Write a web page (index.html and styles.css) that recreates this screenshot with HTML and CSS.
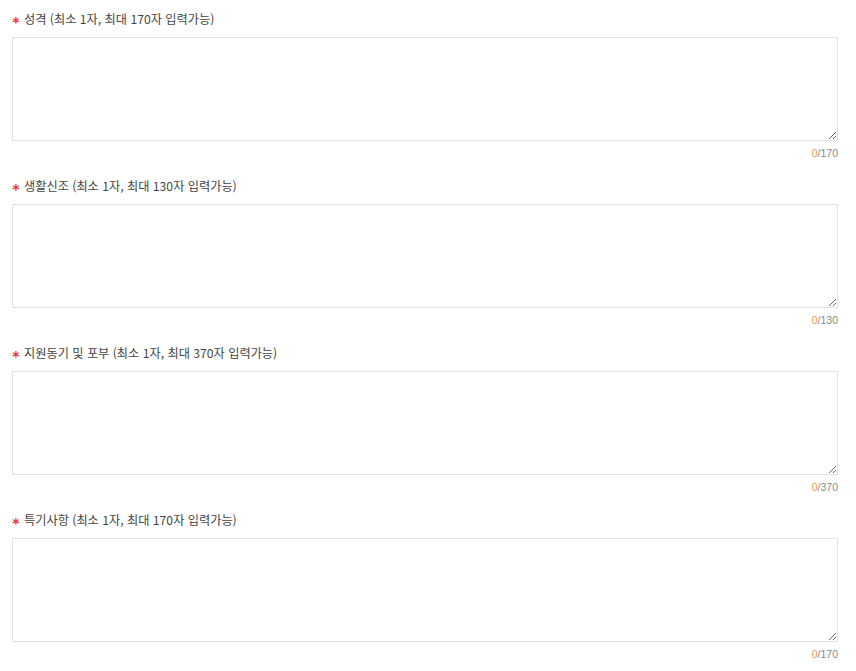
FILE: index.html
```html
<!DOCTYPE html>
<html lang="ko">
<head>
    <meta charset="UTF-8">
    <meta name="viewport" content="width=device-width, initial-scale=1.0">
    <title>자기소개</title>
    <link rel="stylesheet" href="styles.css">
</head>
<body>
    <div class="form">
        <div class="field">
            <label class="field-label" for="f1"><span class="req">*</span><span>성격 (최소 1자, 최대 170자 입력가능)</span></label>
            <textarea id="f1" class="field-input"></textarea>
            <div class="counter"><span class="count">0</span>/170</div>
        </div>

        <div class="field">
            <label class="field-label" for="f2"><span class="req">*</span><span>생활신조 (최소 1자, 최대 130자 입력가능)</span></label>
            <textarea id="f2" class="field-input"></textarea>
            <div class="counter"><span class="count">0</span>/130</div>
        </div>

        <div class="field">
            <label class="field-label" for="f3"><span class="req">*</span><span>지원동기 및 포부 (최소 1자, 최대 370자 입력가능)</span></label>
            <textarea id="f3" class="field-input"></textarea>
            <div class="counter"><span class="count">0</span>/370</div>
        </div>

        <div class="field">
            <label class="field-label" for="f4"><span class="req">*</span><span>특기사항 (최소 1자, 최대 170자 입력가능)</span></label>
            <textarea id="f4" class="field-input"></textarea>
            <div class="counter"><span class="count">0</span>/170</div>
        </div>
    </div>
</body>
</html>
```

FILE: styles.css
```css
body {
    margin: 0;
    padding: 9px 18px 0 12px;
    background: #ffffff;
    font-family: 'Noto Sans CJK KR', 'Noto Sans', sans-serif;
    color: #444;
}
.form {
    width: 826px;
}
.field {
    height: 167px;
}
.field-label {
    display: flex;
    align-items: center;
    gap: 4px;
    font-size: 12.2px;
    height: 20px;
    margin-bottom: 8px;
    color: #444;
}
.req {
    width: 8px;
    height: 20px;
    padding-top: 3px;
    box-sizing: border-box;
    text-align: center;
    color: #e2342f;
    font-family: 'DejaVu Sans', sans-serif;
    font-size: 14px;
    font-weight: bold;
    line-height: 20px;
}
.field-input {
    display: block;
    box-sizing: border-box;
    width: 100%;
    height: 104px;
    margin: 0;
    padding: 8px;
    border: 1px solid #e2e2e2;
    border-radius: 0;
    background: #fff;
    font-family: inherit;
    font-size: 13px;
    resize: vertical;
}
.counter {
    margin-top: 5px;
    text-align: right;
    font-family: 'Liberation Sans', sans-serif;
    font-size: 10.5px;
    line-height: 14px;
    color: #888;
}
.count {
    color: #f0994f;
}
```
